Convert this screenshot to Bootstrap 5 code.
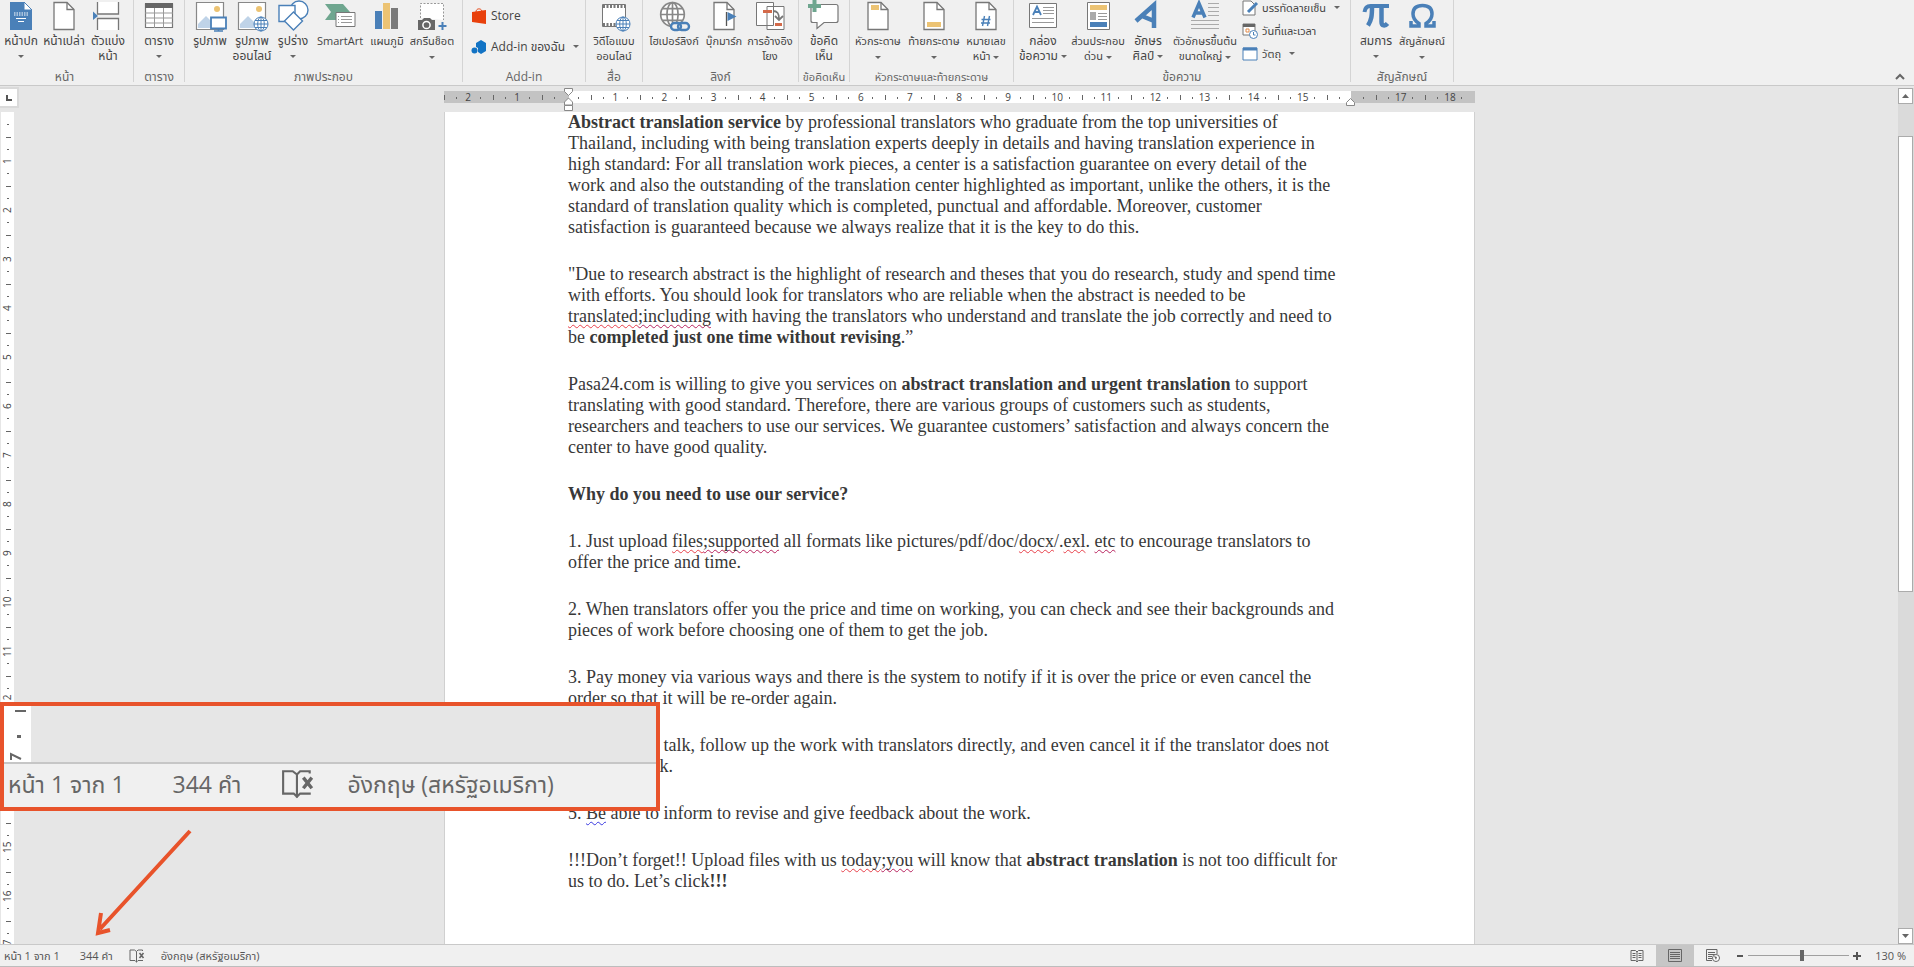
<!DOCTYPE html>
<html lang="th">
<head>
<meta charset="utf-8">
<meta name="viewport" content="width=device-width, initial-scale=1">
<title>Word – แทรก</title>
<link href="https://cdn.jsdelivr.net/npm/bootstrap@5.3.0/dist/css/bootstrap.min.css" rel="stylesheet">
<style>
  :root { --ink:#444; --line:#c9c9c9; --blue:#4a80b8; --accent:#e8532b; --side:17px; }
  body { font-family:"Open Sans","Noto Sans Thai","Noto Sans",sans-serif; font-size:12px; line-height:15px; color:var(--ink); background:#e6e6e6; }
  button { font:inherit; color:inherit; border:0; background:none; padding:0; }
  svg { overflow:visible; display:block; flex:none; }

  /* ribbon */
  .ribbon { height:86px; background:#f0f0f0; border-bottom:1px solid var(--line); }
  .rgroup { height:82px; border-right:1px solid #d4d4d4; flex:none; }
  .rgroup-name { color:#666; height:15px; margin-bottom:-2px; }
  .tool { flex:none; height:66px; white-space:nowrap; }
  .tool svg { width:32px; height:32px; margin-bottom:1px; }
  .tool-label { line-height:15px; }
  .tight { font-size:11px; }
  .caret { display:inline-block; border:3px solid transparent; border-top:3px solid #666; border-bottom:0; vertical-align:middle; }
  .w40{width:40px}.w42{width:42px}.w44{width:44px}.w46{width:46px}.w48{width:48px}.w50{width:50px}.w54{width:54px}.w56{width:56px}.w60{width:60px}.w74{width:74px}
  .g133{width:134px}.g51{width:51px}.g278{width:278px}.g123{width:123px}.g57{width:57px}.g156{width:156px}.g164{width:164px}.g337{width:337px}.g103{width:103px}
  .row-tool { height:23px; white-space:nowrap; }
  .tool-stack { margin-top:-4px; }

  /* rulers */
  .ruler-row { height:26px; padding-top:5px; }
  .corner { width:var(--side); height:17px; background:#fff; box-shadow:0 0 0 2px #dadada; margin-top:-2px; }
  .desk { padding-left:3px; }
  .sheet-w { width:100%; max-width:1031px; }
  .hruler { height:12px; font-size:10px; line-height:12px; background:linear-gradient(90deg,#c3c3c3 125px,#fff 125px calc(100% - 124px),#c3c3c3 calc(100% - 124px)); }
  .hruler span { flex:1 1 0; text-align:center;
    background:linear-gradient(#666,#666) 0 4px/1px 5px no-repeat,linear-gradient(#666,#666) 25% 6px/1px 2px no-repeat,linear-gradient(#666,#666) 75% 6px/1px 2px no-repeat; }
  .marker { position:absolute; top:-3px; }
  .vruler { width:13px; margin-left:1px; background:#fff; font-size:10px; line-height:13px; }
  .vruler span { flex:none; height:49px; width:13px; text-align:center; writing-mode:vertical-rl; transform:rotate(180deg);
    background:linear-gradient(#666,#666) 3px 100%/5px 1px no-repeat,linear-gradient(#666,#666) 5px 25%/2px 1px no-repeat,linear-gradient(#666,#666) 5px 75%/2px 1px no-repeat; }
  .vruler .half { height:25px; background:linear-gradient(#666,#666) 5px 50%/2px 1px no-repeat; }

  /* document */
  .sheet { background:#fff; border-left:1px solid #d0d0d0; border-right:1px solid #d0d0d0; padding-left:123px; color:#383838;
    font-family:"Liberation Serif","Times New Roman",serif; font-size:18px; line-height:21px; white-space:nowrap; }
  .sheet p { margin:0 0 26px; }
  .sp { text-decoration:underline wavy #e8404a 1px; text-underline-offset:2px; text-decoration-skip-ink:none; }
  .gr { text-decoration-color:#b8235f; }
  .bl { text-decoration-color:#3a3ae0; }

  /* scroll bar */
  .vscroll { width:16px; background:#dadada; margin-top:2px; }
  .vscroll button { height:16px; width:15px; background:#fff; border:1px solid #ababab; }
  .thumb { background:#fff; border:1px solid #ababab; width:15px; height:456px; margin-top:32px; }

  /* status bar */
  .status { height:23px; background:#f0f0f0; border-top:1px solid var(--line); border-bottom:1px solid #bdbdbd; font-size:11px; white-space:nowrap; color:#555; }
  .view { width:38px; height:21px; }
  .view.on { background:#c6c6c6; }
  .zoom { appearance:none; width:101px; height:12px; margin:0; background:linear-gradient(#a0a0a0,#a0a0a0) 0 5px/100% 1px no-repeat; }
  .zoom::-webkit-slider-thumb { appearance:none; width:4px; height:11px; background:#666; border-radius:0; }
  .zoom-value { margin-left:14px; }

  /* enlarged note over the page */
  .callout { position:absolute; left:0; bottom:156px; width:660px; height:109px; border:4px solid var(--accent); background:#e6e6e6; }
  .callout-ruler { width:27px; background:#fff; }
  .callout-bar { height:45px; background:#f0f0f0; border-top:2px solid #c6c6c6; padding-bottom:3px; font-size:23px; line-height:32px; color:#666; white-space:nowrap; }
  .pointer { position:absolute; left:94px; bottom:30px; }
</style>
</head>
<body class="vh-100 d-flex flex-column overflow-hidden position-relative">

<svg width="0" height="0" class="position-absolute" aria-hidden="true">
  <defs>
    <symbol id="doc" viewBox="0 0 32 32"><path d="M6 2.500h13l7 7v20H6z" fill="#fff" stroke="#777" stroke-width="1.300"/><path d="M19 2.500v7h7" fill="none" stroke="#777" stroke-width="1.300"/></symbol>
    <symbol id="pic" viewBox="0 0 32 32"><path d="M2.500 2.500h27v27h-27z" fill="#fff" stroke="#888" stroke-width="1.200"/><circle cx="23" cy="9" r="3" fill="#ecc373"/><path d="M4 28V24l8-8 8 8v4z" fill="#bfd3e8"/></symbol>
    <symbol id="globe" viewBox="0 0 16 16"><circle cx="8" cy="8" r="7" fill="#fff"/><g fill="none" stroke="currentColor" stroke-width="1"><circle cx="8" cy="8" r="7"/><ellipse cx="8" cy="8" rx="3.300" ry="7"/><path d="M8 1v14M1 8h14M2 4.500h12M2 11.500h12"/></g></symbol>
    <symbol id="book" viewBox="0 0 16 16"><g fill="none" stroke="#666" stroke-width="1"><path d="M7.500 14.500V3.500L5.500 2H1v10.500h5L7.500 14l1.500-1.500h5M7.500 3.500L9 2h4.500v1"/><path d="M10.500 5l4 5M14.500 5l-4 5" stroke-width="1.600"/></g></symbol>
  </defs>
</svg>

<header class="ribbon d-flex flex-shrink-0 position-relative overflow-hidden">
  <section class="rgroup g133 d-flex flex-column justify-content-between">
    <div class="d-flex">
      <button class="tool w42 d-flex flex-column align-items-center"><svg viewBox="0 0 32 32"><path d="M5 2h14l8 8v20H5z" fill="#4a80b8"/><path d="M19 2v8h8z" fill="#fff" stroke="#4a80b8"/><path d="M9 13h14M9 15h14" stroke="#fff" stroke-width="1.200" stroke-dasharray="1.500 1"/><path d="M11 18.500h10M13 21.500h6" stroke="#fff"/></svg><span class="tool-label">หน้าปก<br><i class="caret"></i></span></button>
      <button class="tool w44 d-flex flex-column align-items-center"><svg><use href="#doc"/></svg><span class="tool-label">หน้าเปล่า</span></button>
      <button class="tool w44 d-flex flex-column align-items-center"><svg viewBox="0 0 32 32"><path d="M5.500 2v12h21V2M5.500 30V18.500h21V30" fill="#fff" stroke="#777" stroke-width="1.300"/><path d="M1 11.500l5 4.500-5 4z" fill="#4a80b8"/></svg><span class="tool-label">ตัวแบ่ง<br>หน้า</span></button>
    </div>
    <div class="rgroup-name text-center pe-1">หน้า</div>
  </section>
  <section class="rgroup g51 d-flex flex-column justify-content-between">
    <button class="tool w50 d-flex flex-column align-items-center"><svg viewBox="0 0 32 32"><path d="M2.500 4h27v23.500h-27z" fill="#fff" stroke="#777" stroke-width="1.200"/><path d="M2 3h28v5H2z" fill="#666"/><path d="M2 13h28M2 18h28M2 23h28M11.500 8v20M20.500 8v20" stroke="#999"/></svg><span class="tool-label">ตาราง<br><i class="caret"></i></span></button>
    <div class="rgroup-name text-center">ตาราง</div>
  </section>
  <section class="rgroup g278 d-flex flex-column justify-content-between">
    <div class="d-flex ps-1">
      <button class="tool w42 d-flex flex-column align-items-center"><svg viewBox="0 0 32 32"><use href="#pic"/><path d="M17 17.500h15v11H17z" fill="#fff" stroke="#4a80b8" stroke-width="1.800"/><path d="M24.500 28v3M20 31h9" stroke="#4a80b8" stroke-width="1.600"/></svg><span class="tool-label">รูปภาพ</span></button>
      <button class="tool w42 d-flex flex-column align-items-center"><svg viewBox="0 0 32 32"><use href="#pic"/><use href="#globe" x="17" y="16" width="16" height="16" color="#4a80b8"/></svg><span class="tool-label">รูปภาพ<br>ออนไลน์</span></button>
      <button class="tool w40 d-flex flex-column align-items-center"><svg viewBox="0 0 32 32"><g fill="#fff" stroke="#4a80b8" stroke-width="1.400"><circle cx="22" cy="10" r="9"/><path d="M2 5.500h16v16H2z"/><path d="M16.500 12l9 9-9 9-9-9z"/></g></svg><span class="tool-label">รูปร่าง<br><i class="caret"></i></span></button>
      <button class="tool w54 d-flex flex-column align-items-center"><svg viewBox="0 0 32 32"><path d="M1 4h18l7 8-7 8H1l6-8z" fill="#6fa68f"/><path d="M12 12.500h19v14H12z" fill="#fff" stroke="#777"/><path d="M17 16.500h11M17 19.500h11M17 22.500h11M14 16.500h1M14 19.500h1M14 22.500h1" stroke="#999"/></svg><span class="tool-label tight">SmartArt</span></button>
      <button class="tool w40 d-flex flex-column align-items-center"><svg viewBox="0 0 32 32"><path d="M4 11h7v18H4z" fill="#4a80b8"/><path d="M12 3h7v26h-7z" fill="#ecc373"/><path d="M20 8h7v21h-7z" fill="#7a7a7a"/></svg><span class="tool-label tight">แผนภูมิ</span></button>
      <button class="tool w50 d-flex flex-column align-items-center"><svg viewBox="0 0 32 32"><path d="M4.500 18V3.500h23V20" fill="#fff" stroke="#999" stroke-dasharray="2 1.500"/><path d="M2 20h4l2-2h6l2 2h3v10H2z" fill="#666"/><circle cx="10.500" cy="25" r="3.600" fill="none" stroke="#fff" stroke-width="1.500"/><path d="M26.500 22v8M22.500 26h8" stroke="#4a80b8" stroke-width="2"/></svg><span class="tool-label tight">สกรีนช็อต<br><i class="caret"></i></span></button>
    </div>
    <div class="rgroup-name text-center">ภาพประกอบ</div>
  </section>
  <section class="rgroup g123 d-flex flex-column justify-content-between">
    <div class="ps-2 d-flex flex-column gap-2 pt-1">
      <button class="row-tool d-flex align-items-center gap-1"><svg width="16" height="16" viewBox="0 0 16 16"><path d="M1 4l14-2v14L1 14z" fill="#e8400c"/><path d="M5 4c0-4 5-4 6-1" fill="none" stroke="#e8400c"/></svg>Store</button>
      <button class="row-tool d-flex align-items-center gap-1"><svg width="16" height="16" viewBox="0 0 16 16"><path d="M5 4l5-3 5 3v8l-5 3-3-2V9L5 8z" fill="#1273c4"/><circle cx="3.500" cy="11.500" r="3" fill="#1273c4"/></svg>Add-in ของฉัน <i class="caret ms-1"></i></button>
    </div>
    <div class="rgroup-name text-center">Add-in</div>
  </section>
  <section class="rgroup g57 d-flex flex-column justify-content-between">
    <button class="tool w56 d-flex flex-column align-items-center"><svg viewBox="0 0 32 32"><path d="M4.500 4.500h23v22h-23z" fill="#fff" stroke="#777"/><path d="M5 6.500h22M5 24.500h22" stroke="#777" stroke-width="3" stroke-dasharray="2 1.500"/><use href="#globe" x="17" y="16" width="16" height="16" color="#4a80b8"/></svg><span class="tool-label tight">วิดีโอแบบ<br>ออนไลน์</span></button>
    <div class="rgroup-name text-center">สื่อ</div>
  </section>
  <section class="rgroup g156 d-flex flex-column justify-content-between">
    <div class="d-flex ps-1">
      <button class="tool w54 d-flex flex-column align-items-center"><svg viewBox="0 0 32 32"><use href="#globe" x="1" y="1" width="27" height="27" color="#888"/><g fill="#f0f0f0" stroke="#4a80b8" stroke-width="2.400"><rect x="13" y="23" width="10" height="7" rx="3.500"/><rect x="20" y="23" width="11" height="7" rx="3.500" fill="none"/></g></svg><span class="tool-label tight">ไฮเปอร์ลิงก์</span></button>
      <button class="tool w46 d-flex flex-column align-items-center"><svg viewBox="0 0 32 32"><use href="#doc"/><path d="M18.500 12v14" stroke="#555" stroke-width="1.300"/><path d="M19.500 12l9 4.500-9 4.500z" fill="#4a80b8"/></svg><span class="tool-label tight">บุ๊กมาร์ก</span></button>
      <button class="tool w46 d-flex flex-column align-items-center"><svg viewBox="0 0 32 32"><path d="M13 6.500h17v23H13zM2.500 2.500h17v23h-17z" fill="#fff" stroke="#777"/><path d="M9 11.500h9M21 24.500h7" stroke="#d36a4a" stroke-width="3"/><path d="M19 11c5 0 6 3 6 8M21 16l4 4 4-4" fill="none" stroke="#777" stroke-width="1.800"/></svg><span class="tool-label tight">การอ้างอิง<br>โยง</span></button>
    </div>
    <div class="rgroup-name text-center">ลิงก์</div>
  </section>
  <section class="rgroup g51 d-flex flex-column justify-content-between">
    <button class="tool w50 d-flex flex-column align-items-center"><svg viewBox="0 0 32 32"><path d="M4 4.500h24c2 0 2 1 2 2v14c0 2-1 2-2 2H16l-7 6v-6H5c-2 0-2-1-2-2V6" fill="#fff" stroke="#777" stroke-width="1.200"/><path d="M6.500-1v13M0 6h13" stroke="#6fa68f" stroke-width="4"/></svg><span class="tool-label">ข้อคิด<br>เห็น</span></button>
    <div class="rgroup-name text-center text-nowrap tight">ข้อคิดเห็น</div>
  </section>
  <section class="rgroup g164 d-flex flex-column justify-content-between">
    <div class="d-flex">
      <button class="tool w56 d-flex flex-column align-items-center"><svg viewBox="0 0 32 32"><use href="#doc"/><path d="M9 5h8v5H9z" fill="#ecc373"/></svg><span class="tool-label tight">หัวกระดาษ<br><i class="caret"></i></span></button>
      <button class="tool w56 d-flex flex-column align-items-center"><svg viewBox="0 0 32 32"><use href="#doc"/><path d="M9 22h14v5H9z" fill="#ecc373"/></svg><span class="tool-label tight">ท้ายกระดาษ<br><i class="caret"></i></span></button>
      <button class="tool w48 d-flex flex-column align-items-center"><svg viewBox="0 0 32 32"><use href="#doc"/><path d="M14.500 16l-2 10M19.500 16l-2 10M11.500 19.500h9M11 23h9" stroke="#4a80b8" stroke-width="1.400"/></svg><span class="tool-label tight">หมายเลข<br>หน้า <i class="caret"></i></span></button>
    </div>
    <div class="rgroup-name text-center text-nowrap tight">หัวกระดาษและท้ายกระดาษ</div>
  </section>
  <section class="rgroup g337 d-flex flex-column justify-content-between">
    <div class="d-flex ps-1">
      <button class="tool w50 d-flex flex-column align-items-center"><svg viewBox="0 0 32 32"><path d="M2.500 3.500h27v24h-27z" fill="#fff" stroke="#777"/><path d="M6 15L10 6.500l4 8.500M7.500 12h5" fill="none" stroke="#4a80b8" stroke-width="1.800"/><path d="M16 7.500h11M16 10.500h11M16 13.500h11M5 18.500h22M5 22.500h22" stroke="#999"/></svg><span class="tool-label">กล่อง<br>ข้อความ <i class="caret"></i></span></button>
      <button class="tool w60 d-flex flex-column align-items-center"><svg viewBox="0 0 32 32"><path d="M5.500 2.500h22v27h-22z" fill="#fff" stroke="#777"/><path d="M8 5h17v5H8z" fill="#ecc373"/><path d="M8 12h6v8H8z" fill="#aaa"/><path d="M16 13.500h9M16 16.500h9M16 19.500h9" stroke="#999"/><path d="M8 22h17v5H8z" fill="#4a80b8"/></svg><span class="tool-label tight">ส่วนประกอบ<br>ด่วน <i class="caret"></i></span></button>
      <button class="tool w40 d-flex flex-column align-items-center"><svg viewBox="0 0 32 32"><path d="M4 21L22 5v23M10 16l12 5" fill="none" stroke="#4a80b8" stroke-width="4.500"/></svg><span class="tool-label">อักษร<br>ศิลป์ <i class="caret"></i></span></button>
      <button class="tool w74 d-flex flex-column align-items-center"><svg viewBox="0 0 32 32"><path d="M4 17.500L10 3.500l6 14M6.500 13h7" fill="none" stroke="#4a80b8" stroke-width="3.500"/><path d="M19 3.500h11M19 7.500h11M19 11.500h11M19 15.500h11M2 20.500h28M2 24.500h28M2 28.500h28" stroke="#aaa"/></svg><span class="tool-label tight">ตัวอักษรขึ้นต้น<br>ขนาดใหญ่ <i class="caret"></i></span></button>
      <div class="tool-stack">
        <button class="row-tool d-flex align-items-center gap-1 tight"><svg width="16" height="16" viewBox="0 0 16 16"><path d="M1 1h8l4 4v10H1z" fill="#fff" stroke="#777"/><path d="M15 3L6 12" stroke="#4a80b8" stroke-width="3"/></svg>บรรทัดลายเซ็น <i class="caret ms-1"></i></button>
        <button class="row-tool d-flex align-items-center gap-1 tight"><svg width="16" height="16" viewBox="0 0 16 16"><path d="M1 1h12v11H1z" fill="#fff" stroke="#777"/><path d="M1 2.500h12" stroke="#666" stroke-width="3"/><path d="M4 6h3v3H4z" fill="none" stroke="#e08a4a"/><circle cx="11.500" cy="11.500" r="4" fill="#fff" stroke="#4a80b8"/><path d="M11.500 9v3h2" fill="none" stroke="#4a80b8"/></svg>วันที่และเวลา</button>
        <button class="row-tool d-flex align-items-center gap-1 tight"><svg width="16" height="16" viewBox="0 0 16 16"><path d="M1 2h14v12H1z" fill="#fff" stroke="#4a80b8"/><path d="M1 3h14" stroke="#4a80b8" stroke-width="3"/></svg>วัตถุ <i class="caret ms-1"></i></button>
      </div>
    </div>
    <div class="rgroup-name text-center">ข้อความ</div>
  </section>
  <section class="rgroup g103 d-flex flex-column justify-content-between">
    <div class="d-flex ps-1">
      <button class="tool w42 d-flex flex-column align-items-center"><svg viewBox="0 0 32 32"><path d="M4.500 12c.5-4 2.500-6 6-6H29" fill="none" stroke="#4a80b8" stroke-width="4"/><path d="M12 7c0 9-.5 13-4 18.500M21.500 7v15c0 4 3.500 4.500 6 1.500" fill="none" stroke="#4a80b8" stroke-width="4.500"/></svg><span class="tool-label">สมการ<br><i class="caret"></i></span></button>
      <button class="tool w50 d-flex flex-column align-items-center"><svg viewBox="0 0 32 32"><path d="M5 21v5h8v-2.500C9 21 7 18 7 14c0-5.500 3.500-8.500 9.500-8.500S26 8.500 26 14c0 4-2 7-6 9.500V26h8v-5" fill="none" stroke="#4a80b8" stroke-width="3.500"/></svg><span class="tool-label tight">สัญลักษณ์<br><i class="caret"></i></span></button>
    </div>
    <div class="rgroup-name text-center">สัญลักษณ์</div>
  </section>
  <button class="ms-auto align-self-end me-2 mb-1" aria-label="ยุบ Ribbon"><svg width="12" height="10" viewBox="0 0 12 10"><path d="M2 8l4-4 4 4" fill="none" stroke="#666" stroke-width="2"/></svg></button>
</header>

<div class="d-flex flex-grow-1 overflow-hidden">
  <div class="flex-grow-1 d-flex flex-column overflow-hidden">
    <div class="ruler-row d-flex flex-shrink-0">
      <div class="corner flex-shrink-0 d-flex"><svg class="m-auto" width="6" height="6"><path d="M1 0v5h5" fill="none" stroke="#555" stroke-width="2"/></svg></div>
      <div class="desk flex-grow-1 d-flex justify-content-center">
        <div class="hruler sheet-w d-flex position-relative">
          <span>2</span><span>1</span><span></span><span>1</span><span>2</span><span>3</span><span>4</span><span>5</span><span>6</span><span>7</span><span>8</span><span>9</span><span>10</span><span>11</span><span>12</span><span>13</span><span>14</span><span>15</span><span></span><span>17</span><span>18</span>
          <svg class="marker" style="left:120px" width="10" height="24"><g fill="#fff" stroke="#888"><path d="M.5.500h8v3l-4 4-4-4zM.5 17v-3l4-4 4 4v3zM.5 17.500h8v5h-8z"/></g></svg>
          <svg class="marker" style="right:119px" width="10" height="24"><path d="M.5 17.500v-3l4-4 4 4v3z" fill="#fff" stroke="#888"/></svg>
        </div>
      </div>
    </div>
    <div class="d-flex flex-grow-1 overflow-hidden">
      <div class="vruler d-flex flex-column flex-shrink-0 overflow-hidden me-1"><span class="half"></span><span>1</span><span>2</span><span>3</span><span>4</span><span>5</span><span>6</span><span>7</span><span>8</span><span>9</span><span>10</span><span>11</span><span>12</span><span>13</span><span>14</span><span>15</span><span>16</span><span>17</span></div>
      <div class="desk flex-grow-1 d-flex justify-content-center">
        <main class="sheet sheet-w">
          <p><b>Abstract translation service</b> by professional translators who graduate from the top universities of<br>Thailand, including with being translation experts deeply in details and having translation experience in<br>high standard: For all translation work pieces, a center is a satisfaction guarantee on every detail of the<br>work and also the outstanding of the translation center highlighted as important, unlike the others, it is the<br>standard of translation quality which is completed, punctual and affordable. Moreover, customer<br>satisfaction is guaranteed because we always realize that it is the key to do this.</p>
          <p>"Due to research abstract is the highlight of research and theses that you do research, study and spend time<br>with efforts. You should look for translators who are reliable when the abstract is needed to be<br><span class="sp">translated</span><span class="sp gr">;including</span> with having the translators who understand and translate the job correctly and need to<br>be <b>completed just one time without revising</b>.”</p>
          <p>Pasa24.com is willing to give you services on <b>abstract translation and urgent translation</b> to support<br>translating with good standard. Therefore, there are various groups of customers such as students,<br>researchers and teachers to use our services. We guarantee customers’ satisfaction and always concern the<br>center to have good quality.</p>
          <p><b>Why do you need to use our service?</b></p>
          <p>1. Just upload <span class="sp">files</span><span class="sp gr">;supported</span> all formats like pictures/pdf/doc/<span class="sp">docx</span>/.<span class="sp">exl</span>. <span class="sp gr">etc</span> to encourage translators to<br>offer the price and time.</p>
          <p>2. When translators offer you the price and time on working, you can check and see their backgrounds and<br>pieces of work before choosing one of them to get the job.</p>
          <p>3. Pay money via various ways and there is the system to notify if it is over the price or even cancel the<br>order so that it will be re-order again.</p>
          <p>4. <span class="sp bl">Be</span> able to talk, follow up the work with translators directly, and even cancel it if the translator does not<br>give feedback.</p>
          <p>5. <span class="sp bl">Be</span> able to inform to revise and give feedback about the work.</p>
          <p>!!!Don’t forget!! Upload files with us <span class="sp">today</span><span class="sp gr">;you</span> will know that <b>abstract translation</b> is not too difficult for<br>us to do. Let’s click<b>!!!</b></p>
        </main>
      </div>
    </div>
  </div>
  <div class="vscroll d-flex flex-column flex-shrink-0">
    <button class="d-flex" aria-label="เลื่อนขึ้น"><svg class="m-auto" width="7" height="4"><path d="M0 4l3.500-4L7 4z" fill="#666"/></svg></button>
    <div class="thumb"></div>
    <button class="d-flex mt-auto" aria-label="เลื่อนลง"><svg class="m-auto" width="7" height="4"><path d="M0 0l3.500 4L7 0z" fill="#666"/></svg></button>
  </div>
</div>

<footer class="status d-flex align-items-center flex-shrink-0 ps-1">
  <span class="me-3 pe-1">หน้า 1 จาก 1</span><span class="me-3">344 คำ</span>
  <svg class="me-3" width="16" height="16"><use href="#book"/></svg><span>อังกฤษ (สหรัฐอเมริกา)</span>
  <div class="ms-auto d-flex align-items-center pe-2">
    <button class="view d-flex" aria-label="โหมดการอ่าน"><svg class="m-auto" width="14" height="14" viewBox="0 0 14 14"><path d="M7 3L5.500 1.500H1v10h4.500L7 13l1.500-1.500H13v-10H8.500zM7 3v10M2.500 4.500h3M2.500 6.500h3M2.500 8.500h3M8.500 4.500h3M8.500 6.500h3M8.500 8.500h3" fill="none" stroke="#666"/></svg></button>
    <button class="view on d-flex" aria-label="เค้าโครงเหมือนพิมพ์"><svg class="m-auto" width="14" height="13" viewBox="0 0 14 13"><path d="M.5.500h13v12H.5zM2 3.500h10M2 5.500h10M2 7.500h10M2 9.500h10" fill="none" stroke="#666"/></svg></button>
    <button class="view d-flex" aria-label="เค้าโครงเว็บ"><svg class="m-auto" width="14" height="13" viewBox="0 0 14 13"><path d="M11 5V.5H.5v11H6M2 3.500h7M2 5.500h7M2 7.500h4M2 9.500h4" fill="none" stroke="#666"/><circle cx="10" cy="9" r="3.500" fill="#fff" stroke="#666"/><path d="M8 7l3 1-1 3z" fill="#666"/></svg></button>
    <button class="ms-1" aria-label="ย่อ"><svg width="8" height="8"><path d="M1 4h6" stroke="#555" stroke-width="2"/></svg></button>
    <input class="zoom mx-1" type="range" min="10" max="100" value="58" aria-label="ย่อ/ขยาย">
    <button aria-label="ขยาย"><svg width="8" height="8"><path d="M0 4h8M4 0v8" stroke="#555" stroke-width="2"/></svg></button>
    <span class="zoom-value">130 %</span>
  </div>
</footer>

<aside class="callout d-flex flex-column">
  <div class="flex-grow-1 callout-ruler"><svg width="27" height="55" viewBox="0 0 27 55"><path d="M11 4h11v2H11zM13 29h4v3h-4z" fill="#666"/><path d="M7 54V48l10 5" fill="none" stroke="#666" stroke-width="2"/></svg></div>
  <div class="callout-bar d-flex align-items-center ps-1">
    <span class="me-5">หน้า 1 จาก 1</span><span class="me-4 pe-3">344 คำ</span>
    <svg class="me-4" width="34" height="34"><use href="#book"/></svg><span class="ms-2">อังกฤษ (สหรัฐอเมริกา)</span>
  </div>
</aside>
<svg class="pointer" width="98" height="108" viewBox="0 0 98 108"><path d="M96 2L6 100M7 84L4 104l12-3" fill="none" stroke="#e8532b" stroke-width="4"/></svg>

<script src="https://cdn.jsdelivr.net/npm/bootstrap@5.3.0/dist/js/bootstrap.bundle.min.js"></script>
</body>
</html>
